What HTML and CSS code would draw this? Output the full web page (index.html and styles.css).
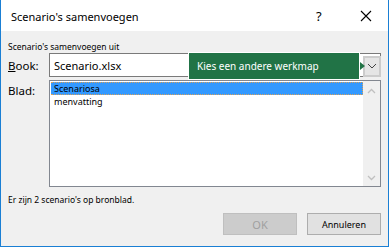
FILE: index.html
```html
<!DOCTYPE html>
<html>
<head>
<meta charset="utf-8">
<link rel="stylesheet" href="styles.css">
</head>
<body>
<div class="dialog">
  <div class="titlebar">
    <span class="title">Scenario's samenvoegen</span>
    <span class="help">?</span>
    <span class="close"><svg width="12" height="12" viewBox="0 0 12 12"><path d="M1 1L11 11M11 1L1 11" stroke="#000" stroke-width="1.1" fill="none"/></svg></span>
  </div>
  <div class="content">
    <div class="caption">Scenario's samenvoegen uit</div>
    <div class="row book-row">
      <label class="label"><u>B</u>ook:</label>
      <div class="combo">
        <span class="combo-text">Scenario.xlsx</span>
        <span class="combo-btn"><svg width="10" height="6" viewBox="0 0 10 6"><path d="M1 1L5 5L9 1" stroke="#444" stroke-width="1" fill="none"/></svg></span>
      </div>
      <div class="tooltip">Kies een andere werkmap<span class="tip-arrow"></span></div>
    </div>
    <div class="row blad-row">
      <label class="label">Blad:</label>
      <div class="listbox">
        <div class="items">
          <div class="item selected">Scenariosa</div>
          <div class="item">menvatting</div>
        </div>
        <div class="scrollbar">
          <svg width="9" height="6" viewBox="0 0 9 6"><path d="M1 5L4.5 1.5L8 5" stroke="#c0c0c0" stroke-width="1.3" fill="none"/></svg>
          <svg width="9" height="6" viewBox="0 0 9 6"><path d="M1 1L4.5 4.5L8 1" stroke="#c0c0c0" stroke-width="1.3" fill="none"/></svg>
        </div>
      </div>
    </div>
    <div class="status">Er zijn 2 scenario's op bronblad.</div>
    <div class="buttons">
      <button class="btn disabled">OK</button>
      <button class="btn">Annuleren</button>
    </div>
  </div>
</div>
</body>
</html>
```
FILE: styles.css
```css
html, body {
  margin: 0;
  padding: 0;
  background: #f0f0f0;
}
.dialog {
  width: 389px;
  height: 247px;
  box-sizing: border-box;
  border: 1px solid #1a7fd4;
  border-top: none;
  display: flex;
  flex-direction: column;
  font-family: "Noto Sans", "DejaVu Sans", sans-serif;
  color: #000;
}
.titlebar {
  height: 31px;
  background: #fff;
  display: flex;
  align-items: center;
  padding-left: 10px;
  flex-shrink: 0;
}
.title {
  font-size: 11px;
  flex: 1;
  padding-top: 1px;
}
.help {
  font-size: 13px;
  width: 18px;
  margin-right: 26px;
  padding-top: 1px;
}
.close {
  width: 24px;
  display: flex;
  align-items: center;
  margin-right: 4px;
}
.content {
  flex: 1;
  background: #f0f0f0;
  display: flex;
  flex-direction: column;
  padding: 10px 7px 0 7px;
  position: relative;
}
.caption {
  font-size: 8.5px;
  line-height: 11px;
  height: 11px;
}
.row {
  display: flex;
}
.label {
  width: 41px;
  font-size: 11.5px;
  flex-shrink: 0;
}
.book-row {
  margin-top: 1px;
  height: 24px;
  position: relative;
  align-items: center;
}
.combo {
  flex: 1;
  height: 24px;
  box-sizing: border-box;
  border: 1px solid #7a7a7a;
  background: #fff;
  display: flex;
  align-items: center;
  justify-content: space-between;
  padding-left: 4px;
}
.combo-text {
  font-size: 11px;
}
.combo-btn {
  width: 18px;
  height: 21px;
  box-sizing: border-box;
  border: 2px solid #cccccc;
  background: #e5e5e5;
  display: flex;
  align-items: center;
  justify-content: center;
  margin-top: 2px;
  margin-right: -1px;
}
.tooltip {
  position: absolute;
  left: 180px;
  top: -1px;
  width: 172px;
  height: 28px;
  box-sizing: border-box;
  background: #217346;
  border: 1px solid #ffffff;
  color: #ffffff;
  font-size: 10px;
  display: flex;
  align-items: center;
  padding-left: 8px;
}
.tip-arrow {
  position: absolute;
  right: -6px;
  top: 9px;
  width: 0;
  height: 0;
  border-top: 4px solid transparent;
  border-bottom: 4px solid transparent;
  border-left: 5px solid #217346;
}
.blad-row {
  margin-top: 3px;
}
.blad-row .label {
  padding-top: 3px;
}
.listbox {
  flex: 1;
  height: 107px;
  box-sizing: border-box;
  border: 1px solid #828790;
  background: #fff;
  display: flex;
}
.items {
  flex: 1;
  padding: 1px 0 0 1px;
}
.item {
  font-size: 9px;
  line-height: 12px;
  height: 12px;
  padding-left: 3px;
  box-sizing: border-box;
}
.item.selected {
  background: #3399ff;
  height: 13px;
  line-height: 12px;
  border: 1px dotted #d9a05a;
  border-left: none;
  line-height: 11px;
  margin-bottom: 1px;
}
.scrollbar {
  width: 17px;
  background: #f0f0f0;
  display: flex;
  flex-direction: column;
  justify-content: space-between;
  align-items: center;
  padding: 7px 0 5px;
}
.status {
  font-size: 8.5px;
  margin-top: 7px;
  line-height: 11px;
}
.buttons {
  display: flex;
  justify-content: flex-end;
  gap: 10px;
  margin-top: 8px;
}
.btn {
  width: 74px;
  height: 22px;
  box-sizing: border-box;
  font-family: "Noto Sans", "DejaVu Sans", sans-serif;
  font-size: 9px;
  background: #e1e1e1;
  border: 1px solid #adadad;
  color: #000;
  padding: 0;
}
.btn.disabled {
  background: #cccccc;
  border-color: #bfbfbf;
  color: #a0a0a0;
  font-size: 11px;
}
```
